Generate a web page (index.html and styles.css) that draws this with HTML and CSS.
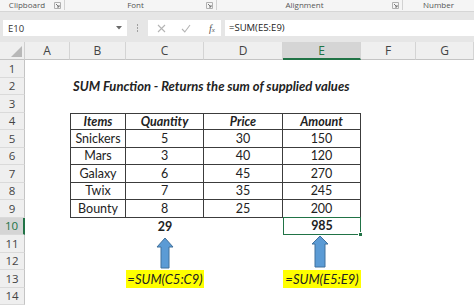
FILE: index.html
```html
<!DOCTYPE html>
<html lang="en">
<head>
  <meta charset="UTF-8">
  <title>SUM Function</title>
  <link rel="stylesheet" href="styles.css">
</head>
<body>

  <div class="ribbon">
    <div class="group g1"><span class="label">Clipboard</span><span class="launch"><svg width="7" height="7" viewBox="0 0 7 7"><path d="M0.5 6.5V0.5H6.5V6.5Z" fill="none" stroke="#b0b0b0"/><path d="M2 2L5 5M3 5H5V3" fill="none" stroke="#777"/></svg></span></div>
    <div class="group g2"><span class="label">Font</span><span class="launch"><svg width="7" height="7" viewBox="0 0 7 7"><path d="M0.5 6.5V0.5H6.5V6.5Z" fill="none" stroke="#b0b0b0"/><path d="M2 2L5 5M3 5H5V3" fill="none" stroke="#777"/></svg></span></div>
    <div class="group g3"><span class="label">Alignment</span><span class="launch"><svg width="7" height="7" viewBox="0 0 7 7"><path d="M0.5 6.5V0.5H6.5V6.5Z" fill="none" stroke="#b0b0b0"/><path d="M2 2L5 5M3 5H5V3" fill="none" stroke="#777"/></svg></span></div>
    <div class="group g4"><span class="label">Number</span></div>
  </div>

  <div class="formula">
    <div class="namebox">
      <span>E10</span>
      <svg class="drop" width="6" height="4" viewBox="0 0 6 4"><path d="M0 0H6L3 3.5Z" fill="#6a6a6a"/></svg>
    </div>
    <div class="dots"><i></i><i></i><i></i></div>
    <div class="fxbox">
      <svg width="9" height="9" viewBox="0 0 9 9"><path d="M1 1L8 8M8 1L1 8" stroke="#b4b4b4" stroke-width="1.1"/></svg>
      <svg width="10" height="9" viewBox="0 0 10 9"><path d="M1 5L3.8 8L9 1" fill="none" stroke="#b4b4b4" stroke-width="1.1"/></svg>
      <span class="fx">f<small>x</small></span>
    </div>
    <div class="input">=SUM(E5:E9)</div>
  </div>

  <div class="sheet">
    <div class="corner"><svg width="11" height="11" viewBox="0 0 11 11"><path d="M11 0V11H0Z" fill="#b8b8b8"/></svg></div>
    <div class="colhead">A</div>
    <div class="colhead">B</div>
    <div class="colhead">C</div>
    <div class="colhead">D</div>
    <div class="colhead sel">E</div>
    <div class="colhead">F</div>
    <div class="colhead">G</div>

    <div class="rowhead">1</div>

    <div class="rowhead">2</div>
    <div class="cell cb title">SUM Function - Returns the sum of supplied values</div>

    <div class="rowhead">3</div>

    <div class="rowhead">4</div>
    <div class="cell cb t first top head">Items</div>
    <div class="cell cc t top head">Quantity</div>
    <div class="cell cd t top head">Price</div>
    <div class="cell ce t top head">Amount</div>

    <div class="rowhead">5</div>
    <div class="cell cb t first">Snickers</div>
    <div class="cell cc t">5</div>
    <div class="cell cd t">30</div>
    <div class="cell ce t">150</div>

    <div class="rowhead">6</div>
    <div class="cell cb t first">Mars</div>
    <div class="cell cc t">3</div>
    <div class="cell cd t">40</div>
    <div class="cell ce t">120</div>

    <div class="rowhead">7</div>
    <div class="cell cb t first">Galaxy</div>
    <div class="cell cc t">6</div>
    <div class="cell cd t">45</div>
    <div class="cell ce t">270</div>

    <div class="rowhead">8</div>
    <div class="cell cb t first">Twix</div>
    <div class="cell cc t">7</div>
    <div class="cell cd t">35</div>
    <div class="cell ce t">245</div>

    <div class="rowhead">9</div>
    <div class="cell cb t first">Bounty</div>
    <div class="cell cc t">8</div>
    <div class="cell cd t">25</div>
    <div class="cell ce t">200</div>

    <div class="rowhead sel">10</div>
    <div class="cell cc total">29</div>
    <div class="cell ce total active">985</div>

    <div class="rowhead">11</div>
    <div class="cell cc arrow">
      <svg width="78" height="35" viewBox="0 0 78 35"><path d="M39 3L47 12H43V33H35V12H31Z" fill="#5b9bd5" stroke="#41719c"/></svg>
    </div>
    <div class="cell ce arrow">
      <svg width="78" height="35" viewBox="0 0 78 35"><path d="M37 1L45 9H42V32H32V9H29Z" fill="#5b9bd5" stroke="#41719c"/></svg>
    </div>

    <div class="rowhead">12</div>

    <div class="rowhead">13</div>
    <div class="cell cc note">=SUM(C5:C9)</div>
    <div class="cell ce note">=SUM(E5:E9)</div>

    <div class="rowhead">14</div>
  </div>

</body>
</html>
```

FILE: styles.css
```css
body {
  margin: 0;
  width: 474px;
  height: 305px;
  overflow: hidden;
  background: #fff;
  font-family: 'Open Sans', sans-serif;
  color: #222;
}

/* ribbon group captions */

.ribbon {
  display: flex;
  height: 11px;
  background: #f5f5f5;
  border-bottom: 1px solid #d6d6d6;
  font-size: 8px;
  color: #555;
}

.group {
  display: flex;
  align-items: center;
  border-right: 1px solid #d2d2d2;
  box-sizing: border-box;
  height: 10px;
}

.g1 { width: 65px; }
.g2 { width: 152px; }
.g3 { width: 186px; }
.g4 { flex: 1; border-right: none; }

.label {
  flex: 1;
  text-align: center;
  line-height: 10px;
}

.launch {
  display: flex;
  margin-right: 3px;
}

/* formula bar */

.formula {
  display: flex;
  height: 16px;
  padding: 8px 0 6px 3px;
  background: #e6e6e6;
}

.namebox {
  width: 124px;
  background: #fff;
  display: flex;
  align-items: center;
  justify-content: space-between;
  padding: 0 5px;
  box-sizing: border-box;
  font-size: 9.5px;
  color: #333;
}

.dots {
  width: 21px;
  display: flex;
  flex-direction: column;
  align-items: center;
  justify-content: center;
  gap: 1.5px;
}

.dots i {
  width: 1.5px;
  height: 1.5px;
  background: #a0a0a0;
}

.fxbox {
  width: 73px;
  background: #fff;
  display: flex;
  align-items: center;
  padding-left: 9px;
  gap: 15px;
  box-sizing: border-box;
}

.fx {
  font-family: 'Liberation Serif', serif;
  font-style: italic;
  font-size: 10px;
  color: #555;
  margin-left: 3px;
}

.fx small {
  font-size: 7px;
}

.input {
  flex: 1;
  margin-left: 4px;
  background: #fff;
  font-size: 9.5px;
  line-height: 16px;
  padding-left: 4px;
  color: #222;
}

/* worksheet */

.sheet {
  display: grid;
  grid-template-columns: 25px 45px 56px 78px 79px 78px 55px 58px;
  grid-template-rows: 18px repeat(14, 17.5px);
  font-family: Lato, sans-serif;
  font-size: 12.5px;
}

.corner, .colhead, .rowhead {
  background: #efefef;
  box-sizing: border-box;
  font-family: 'Open Sans', sans-serif;
  color: #444;
  display: flex;
  align-items: center;
  justify-content: center;
}

.corner {
  border-right: 1px solid #d0d0d0;
  border-bottom: 1px solid #c4c4c4;
  align-items: flex-end;
  justify-content: flex-end;
  padding: 0 2px 2px 0;
}

.colhead {
  border-right: 1px solid #d4d4d4;
  border-bottom: 1px solid #c4c4c4;
  font-size: 12px;
}

.colhead.sel {
  background: #d5d5d5;
  border-bottom: 2px solid #217346;
  color: #217346;
}

.rowhead {
  grid-column: 1;
  border-right: 1px solid #c4c4c4;
  border-bottom: 1px solid #dadada;
  font-size: 11.5px;
}

.rowhead.sel {
  background: #d5d5d5;
  border-right: 2px solid #217346;
  color: #217346;
}

.cell {
  box-sizing: border-box;
  display: flex;
  align-items: center;
  justify-content: center;
  white-space: nowrap;
}

.cb { grid-column: 3; }
.cc { grid-column: 4; }
.cd { grid-column: 5; }
.ce { grid-column: 6; }

.title {
  justify-content: flex-start;
  padding-left: 3px;
  font-size: 13px;
  font-weight: bold;
  font-style: italic;
  overflow: visible;
}

.t {
  border-right: 1px solid #3c3c3c;
  border-bottom: 1px solid #3c3c3c;
}

.t.first { border-left: 1px solid #3c3c3c; }
.t.top { border-top: 1px solid #3c3c3c; }

.head {
  font-weight: bold;
  font-style: italic;
}

.total {
  font-weight: bold;
}

.active {
  position: relative;
  border: 1px solid #217346;
  margin-top: -1px;
}

.active::after {
  content: '';
  position: absolute;
  right: -3px;
  bottom: -3px;
  width: 3px;
  height: 3px;
  background: #217346;
  border: 1px solid #fff;
}

.arrow {
  grid-row: span 2;
  align-items: flex-start;
}

.note {
  background: #ffff00;
  font-style: italic;
  font-size: 13px;
}
```
